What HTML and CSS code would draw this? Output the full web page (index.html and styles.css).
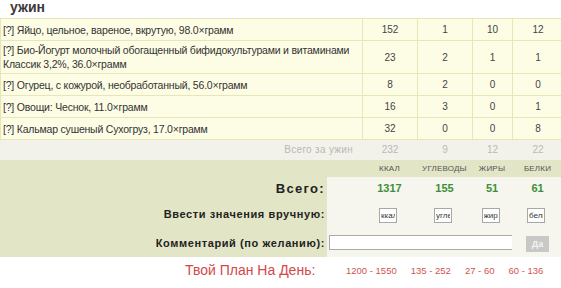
FILE: index.html
```html
<!DOCTYPE html>
<html lang="ru">
<head>
<meta charset="utf-8">
<title>Ужин</title>
<link rel="stylesheet" href="styles.css">
</head>
<body>
<h2 class="meal-title">ужин</h2>
<table class="items">
  <colgroup><col class="c-name"><col class="c-kcal"><col class="c-carb"><col class="c-fat"><col class="c-prot"></colgroup>
  <tr><td class="name">[?] Яйцо, цельное, вареное, вкрутую, 98.0×грамм</td><td>152</td><td>1</td><td>10</td><td>12</td></tr>
  <tr class="tall"><td class="name">[?] Био-Йогурт молочный обогащенный бифидокультурами и витаминами<br>Классик 3,2%, 36.0×грамм</td><td>23</td><td>2</td><td>1</td><td>1</td></tr>
  <tr><td class="name">[?] Огурец, с кожурой, необработанный, 56.0×грамм</td><td>8</td><td>2</td><td>0</td><td>0</td></tr>
  <tr><td class="name">[?] Овощи: Чеснок, 11.0×грамм</td><td>16</td><td>3</td><td>0</td><td>1</td></tr>
  <tr><td class="name">[?] Кальмар сушеный Сухогруз, 17.0×грамм</td><td>32</td><td>0</td><td>0</td><td>8</td></tr>
  <tr class="subtotal"><td class="name">Всего за ужин</td><td>232</td><td>9</td><td>12</td><td>22</td></tr>
</table>
<table class="summary">
  <colgroup><col class="s-label"><col class="s-gap"><col class="c-kcal"><col class="c-carb"><col class="c-fat"><col class="c-prot"></colgroup>
  <tr class="heads"><td></td><td></td><td>ккал</td><td>углеводы</td><td>жиры</td><td>белки</td></tr>
  <tr class="totals"><th>Всего:</th><td class="val"></td><td class="val">1317</td><td class="val">155</td><td class="val">51</td><td class="val">61</td></tr>
  <tr class="manual"><th>Ввести значения вручную:</th><td class="val"></td><td class="val"><input class="mini" placeholder="ккал"></td><td class="val"><input class="mini" placeholder="углеводы"></td><td class="val"><input class="mini" placeholder="жиры"></td><td class="val"><input class="mini" placeholder="белки"></td></tr>
  <tr class="comment"><th>Комментарий (по желанию):</th><td class="val comment-cell" colspan="4"><input class="comment-input"></td><td class="val btn-cell"><button class="ok">Да</button></td></tr>
</table>
<div class="plan">
  <span class="plan-title">Твой План На День:</span>
  <span class="plan-vals"><span>1200 - 1550</span><span>135 - 252</span><span>27 - 60</span><span>60 - 136</span></span>
</div>
</body>
</html>
```
FILE: styles.css
```css
html, body { margin: 0; padding: 0; background: #fff; }
body { font-family: "Liberation Sans", Arial, sans-serif; color: #333; width: 561px; overflow: hidden; }

.meal-title { margin: 0; padding: 0 0 0 10px; height: 18px; font-size: 14px; font-weight: bold; color: #3a3a3a; line-height: 15px; }

.items { border-collapse: collapse; table-layout: fixed; width: 563px; margin-top: 0; }
.c-name { width: 362px; }
.c-kcal { width: 55px; }
.c-carb { width: 55px; }
.c-fat { width: 40px; }
.c-prot { width: 51px; }
.items td { background: #fdfde5; border: 1px solid #e6e6b6; font-size: 10px; color: #444; text-align: center; height: 21px; padding: 0; }
.items td.name { text-align: left; padding-left: 2px; font-size: 10.5px; letter-spacing: -0.2px; color: #333; line-height: 14px; white-space: nowrap; }
.items tr.tall td { height: 32px; }
.items tr.subtotal td { background: #f2f2ea; border-color: #f2f2ea; color: #b9b9b9; height: 19px; }
.items tr.subtotal td.name { text-align: right; padding-right: 9px; font-size: 10px; letter-spacing: 0.3px; }

.summary { border-collapse: collapse; table-layout: fixed; width: 563px; background: #e3e6c6; }
.s-label { width: 327px; }
.s-gap { width: 35px; }
.summary td, .summary th { padding: 0; text-align: center; }
.summary th { text-align: right; padding-right: 2px; font-weight: bold; color: #222; white-space: nowrap; }
.summary tr.heads td { height: 17px; font-size: 8px; text-transform: uppercase; color: #555; letter-spacing: 0.2px; vertical-align: middle; }
.summary td.val { background: #f6f6ee; }
.summary tr.totals td, .summary tr.totals th { height: 22px; }
.summary tr.totals th { font-size: 13px; letter-spacing: 1.3px; }
.summary tr.totals td { font-size: 11px; font-weight: bold; color: #3d8f3d; }
.summary tr.manual td, .summary tr.manual th { height: 29px; }
.summary tr.manual th, .summary tr.comment th { font-size: 11px; letter-spacing: 0.6px; }
.summary tr.comment td, .summary tr.comment th { height: 29px; }

.mini { width: 14px; height: 13px; padding: 0 1px; border: 1px solid #a8a8a8; font: 8px "Liberation Sans", Arial, sans-serif; color: #333; background: #fff; box-sizing: content-box; overflow: hidden; margin-left: -3px; }
.mini::placeholder { color: #333; }
.comment-cell { text-align: left !important; padding-left: 2px !important; }
.comment-input { width: 186px; height: 13px; border: 1px solid #aaa; padding: 0; margin: 0; background: #fff; display: block; }
.ok { width: 23px; height: 16px; border: 0; background: #c8c8c6; color: #f4f4f4; font: bold 9px "Liberation Sans", Arial, sans-serif; padding: 0; }

.plan { display: flex; align-items: center; height: 26px; }
.plan-title { margin-left: 185px; font-size: 14px; color: #d44848; width: 161px; }
.plan-vals { display: flex; gap: 14px; font-size: 9.5px; color: #d0544f; }
```
